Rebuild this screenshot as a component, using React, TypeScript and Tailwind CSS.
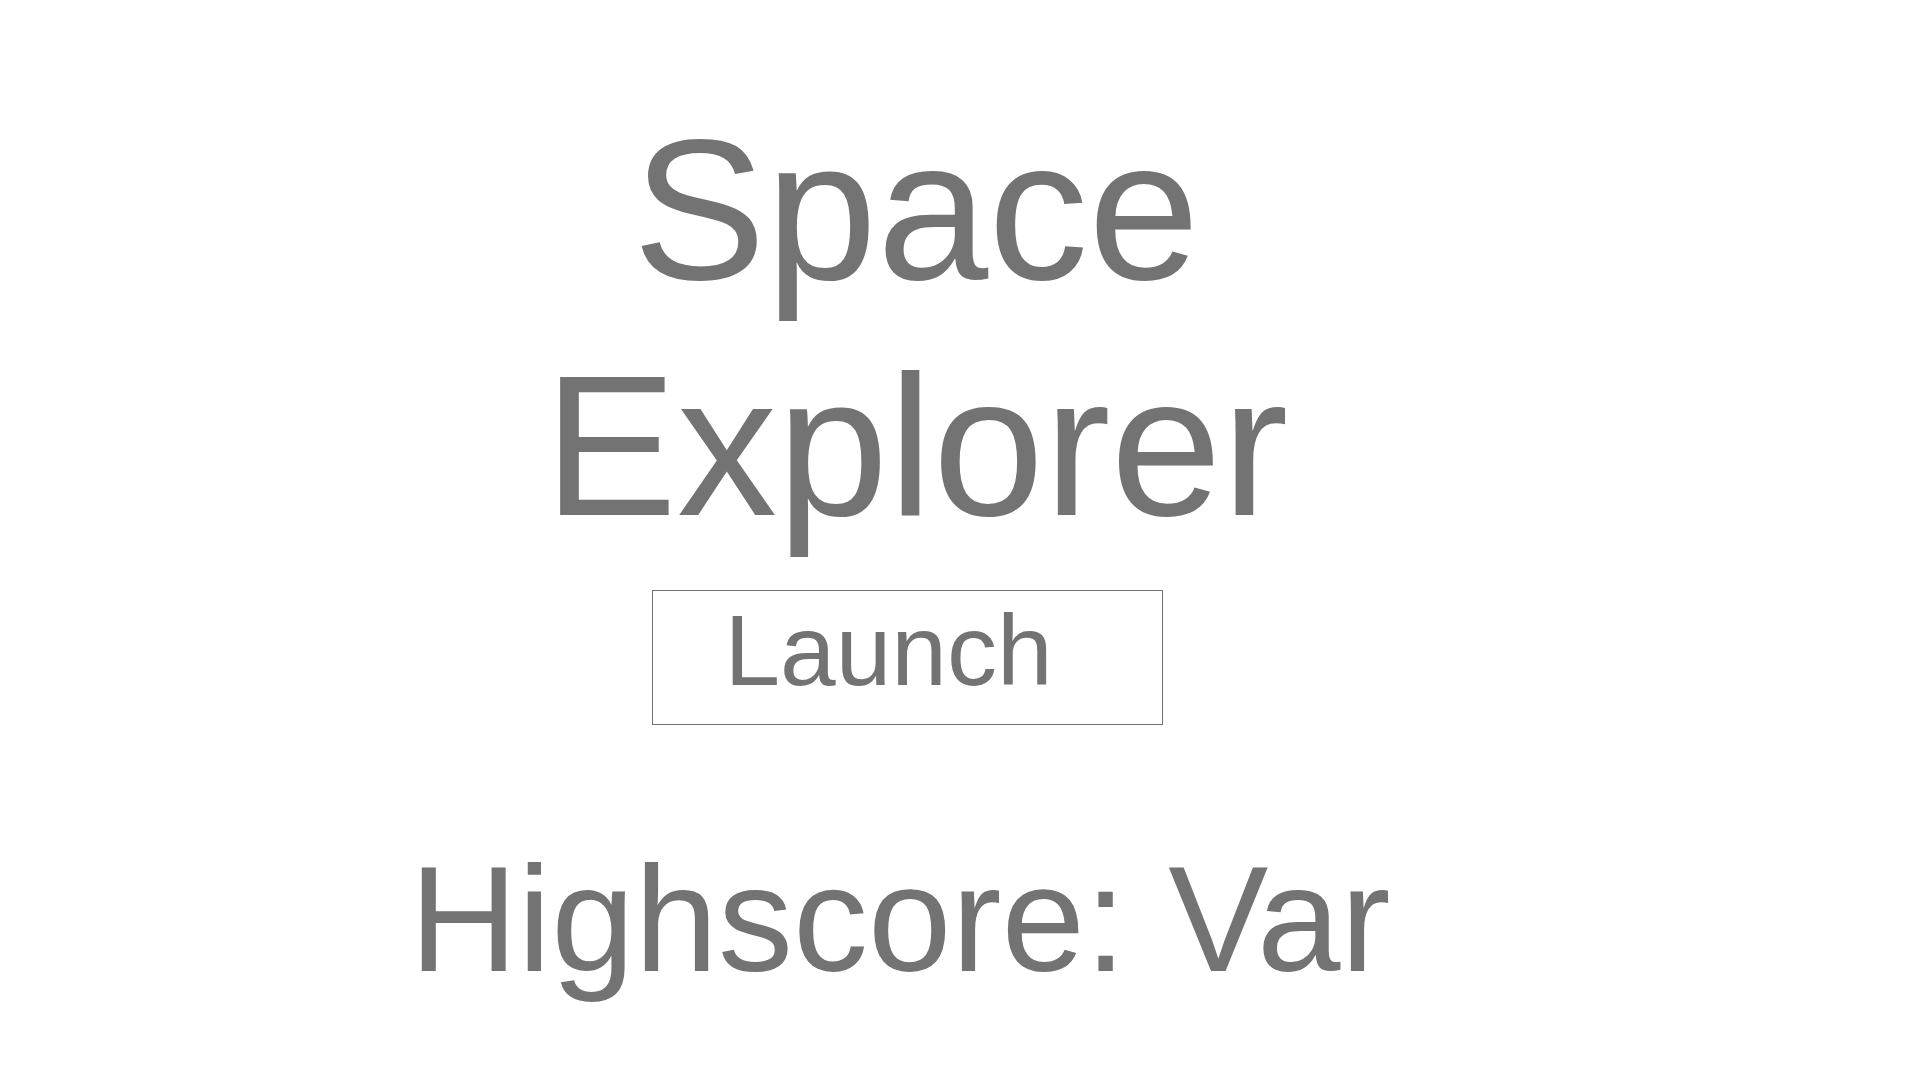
import React from "react";

export default function App() {
  return (
    <div className="min-h-screen w-full bg-white flex flex-col items-center pt-[92px] pr-[100px] text-[#737373] font-['Liberation_Sans',Arial,Helvetica,sans-serif]">
      <h1 className="w-min text-center text-[200px] leading-[236px] font-normal ml-[12px]">
        Space Explorer
      </h1>
      <button
        type="button"
        className="mt-[26px] mr-[6px] box-border flex h-[135px] w-[511px] items-start border border-[#737373] bg-white pl-[72px] pt-[9px] text-[100px] leading-[100px] text-[#737373]"
      >
        Launch
      </button>
      <p className="mt-[82px] mr-[20px] whitespace-nowrap text-[150px] leading-normal">
        Highscore: Var
      </p>
    </div>
  );
}
